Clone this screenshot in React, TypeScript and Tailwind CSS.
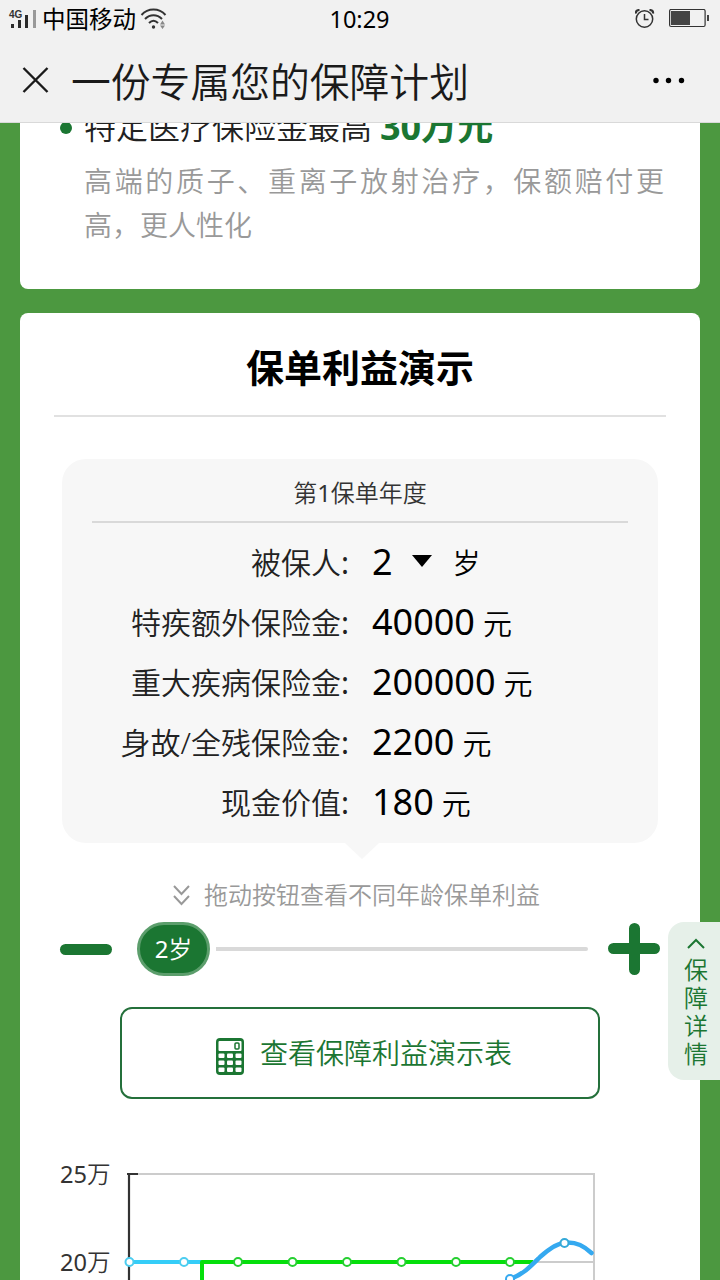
const rows = [
  { label: '特疾额外保险金', value: '40000' },
  { label: '重大疾病保险金', value: '200000' },
  { label: '身故/全残保险金', value: '2200' },
  { label: '现金价值', value: '180' },
];

const greenDots = [238, 292.5, 347, 401.5, 456, 510];

const StatusBar = () => (
  <div className="flex h-[38px] items-center justify-between pl-2 pr-[11px]">
    <div className="flex flex-1 items-center">
      <svg width="30" height="24" viewBox="0 0 30 24">
        <text x="1" y="10.500" fontSize="10" fontWeight="700" fill="#333" fontFamily="Liberation Sans, sans-serif">4G</text>
        <path d="M4.500 17v4M11.500 13v8M18.500 8v13" stroke="#2b2b2b" strokeWidth="3" />
        <path d="M26.500 3v18" stroke="#999" strokeWidth="3" />
      </svg>
      <span className="ml-1 pt-0.5 text-[23.5px] font-normal leading-none text-black">中国移动</span>
      <svg className="ml-1" width="28" height="24" viewBox="0 0 28 24" fill="none" stroke="#333" strokeWidth="2">
        <path d="M1.500 8C8 .8 19 .8 25.500 8M5 12c5-5 12-5 17 0M9 16c3-3 6-3 9 0" />
        <circle cx="13.500" cy="20" r="1.700" fill="#333" stroke="none" />
        <path d="M20 17.500l2.500-4 2.500 4zM20 18.500l2.500 3.500 2.500-3.500z" fill="#888" stroke="none" />
      </svg>
    </div>
    <span className="pl-0.5 pt-0.5 text-[23.5px] font-normal leading-none text-black">10:29</span>
    <div className="flex flex-1 items-center justify-end gap-3.5">
      <svg width="20" height="20" viewBox="0 0 20 20" fill="none" stroke="#333" strokeWidth="1.500">
        <circle cx="9.500" cy="10" r="8.200" />
        <path d="M9.500 5v5.500h4" />
        <path d="M1 4.500Q.5 1 4.500 1M18 4.500Q18.500 1 14.500 1" strokeWidth="2.200" />
      </svg>
      <svg width="40" height="20" viewBox="0 0 40 20">
        <rect x="0.600" y="0.500" width="35.500" height="17" rx="1.500" fill="none" stroke="#333" strokeWidth="1.200" />
        <rect x="2" y="2" width="19" height="14" fill="#444" />
        <rect x="38" y="6" width="2" height="6" fill="#444" />
      </svg>
    </div>
  </div>
);

const Header = () => (
  <header className="h-[123px] border-b border-[#d9d9d9] bg-[#f1f1f1]">
    <StatusBar />
    <div className="flex h-[84px] items-center pl-[22px] pr-[34px]">
      <svg width="27" height="27" viewBox="0 0 27 27" stroke="#1a1a1a" strokeWidth="2.400">
        <path d="M1.500 1l24 24M25.500 1l-24 24" />
      </svg>
      <h1 className="ml-[22px] flex-1 pt-1 text-[39.8px] font-[350] leading-none text-[#1a1a1a]">一份专属您的保障计划</h1>
      <svg width="34" height="8" viewBox="0 0 34 8" fill="#000">
        <circle cx="4" cy="4.500" r="2.700" />
        <circle cx="16.500" cy="4.500" r="2.700" />
        <circle cx="29.500" cy="4.500" r="2.700" />
      </svg>
    </div>
  </header>
);

const RowLabel = ({ text }: { text: string }) => (
  <span className="w-[257px] text-right text-[30px] text-[#222]">
    {text}
    <span className="font-normal">:</span>
  </span>
);

const Calculator = () => (
  <svg className="mt-2" width="30" height="38" viewBox="0 0 30 38">
    <rect x="1" y="0" width="28" height="37" rx="4" fill="#1b7632" />
    <rect x="3.500" y="3" width="23" height="10" rx="1" fill="#fff" />
    <rect x="20" y="5" width="4" height="6" rx="1" fill="none" stroke="#1b7632" strokeWidth="1.500" />
    {[15.5, 22.5, 29.5].map((y) =>
      [3.5, 12, 20.5].map((x) => (
        <rect key={`${x}-${y}`} x={x} y={y} width="6" height="4.500" rx="1" fill="#fff" />
      ))
    )}
  </svg>
);

const Slider = () => (
  <div className="mt-[9px] flex h-[54px] items-center px-10">
    <div className="h-[11px] w-[52px] rounded-full bg-[#1b7632]" />
    <div className="ml-[25px] flex h-[54px] w-[73px] items-center justify-center rounded-[27px] border-[3px] border-[#5c9e6c] bg-[#1b7632] text-[24px] leading-none text-white">
      <span className="font-normal">2</span>岁
    </div>
    <div className="ml-1.5 h-1 flex-1 rounded-r-full bg-[#d9d9d9]" />
    <svg className="ml-5" width="52" height="52" viewBox="0 0 52 52" stroke="#1b7632" strokeWidth="11" strokeLinecap="round">
      <path d="M5.500 25.500h41M26.500 5.500v41" />
    </svg>
  </div>
);

const Chart = () => (
  <svg className="mt-10 block" width="680" height="145" viewBox="20 1139 680 145" fill="none">
    <g fill="#333" fontSize="23.600">
      <text x="60" y="1182.500"><tspan fontWeight="400">25</tspan>万</text>
      <text x="60" y="1270.500"><tspan fontWeight="400">20</tspan>万</text>
    </g>
    <path d="M129 1174H594V1284M129 1262H594" stroke="#ccc" strokeWidth="2" />
    <path d="M127 1174h11M129 1174v110" stroke="#333" strokeWidth="2.200" />
    <path d="M129 1262H203" stroke="#35cdf8" strokeWidth="4" />
    <path d="M202 1284V1262H533" stroke="#05df0b" strokeWidth="4" strokeLinejoin="round" />
    <path d="M510 1279C524 1274 532 1265 540 1257C550 1248 558 1243 566 1242.500C577 1242 584 1246 591.500 1253" stroke="#35a9f0" strokeWidth="4.500" strokeLinecap="round" />
    <g fill="#fff" strokeWidth="2">
      {[129.5, 184].map((x) => (
        <circle key={x} cx={x} cy="1262" r="4" stroke="#4ccdf0" />
      ))}
      {greenDots.map((x) => (
        <circle key={x} cx={x} cy="1262" r="4" stroke="#25cf30" />
      ))}
      <circle cx="510" cy="1279" r="4" stroke="#35a9f0" />
      <circle cx="564.500" cy="1243" r="4" stroke="#35a9d8" />
    </g>
  </svg>
);

const App = () => {
  return (
    <div className="relative flex h-[1280px] w-[720px] flex-col overflow-hidden bg-[#4c9840] font-['Noto_Sans','Noto_Sans_CJK_SC',sans-serif] font-[350]">
      <Header />

      <main className="flex min-h-0 flex-1 flex-col gap-6 overflow-hidden px-5">
        <section className="-mt-[19px] h-[185px] shrink-0 rounded-b-lg bg-white pl-10 pr-9">
          <div className="flex h-[47px] items-center pb-0.5 leading-none">
            <span className="mr-[12px] mt-0.5 h-3 w-3 rounded-full bg-[#1b7632]" />
            <span className="text-[32px] text-[#222]">特定医疗保险金最高</span>
            <b className="ml-2 text-[36px] font-bold text-[#1b7632]">30万元</b>
          </div>
          <p className="ml-6 mt-2 w-[580px] text-justify text-[28px] leading-[44px] text-[#999]">
            高端的质子、重离子放射治疗，保额赔付更高，更人性化
          </p>
        </section>

        <section className="h-[980px] shrink-0 rounded-lg bg-white">
          <h2 className="mx-[34px] flex h-[104px] items-center justify-center border-b-2 border-[#e1e1e1] pb-0.5 pt-2 text-[38px] font-bold leading-none text-black">
            保单利益演示
          </h2>

          <div className="relative mx-[42px] mt-[42px] h-[384px] rounded-3xl bg-[#f7f7f7] px-[30px]">
            <h3 className="flex h-16 items-center justify-center border-b-2 border-[#d9d9d9] pt-1.5 text-[24px] leading-none text-[#333]">
              <span>第<span className="font-normal">1</span>保单年度</span>
            </h3>
            <div className="pt-[10px] leading-none text-black">
              <div className="flex h-[60px] items-center">
                <RowLabel text="被保人" />
                <span className="ml-[23px] pb-[3px] text-[36px] font-normal">2</span>
                <svg className="mb-1 ml-[19px]" width="20" height="12" viewBox="0 0 20 12">
                  <path d="M0 0h20L10 12z" />
                </svg>
                <span className="ml-[21px] text-[28px]">岁</span>
              </div>
              {rows.map((row) => (
                <div key={row.label} className="flex h-[60px] items-center">
                  <RowLabel text={row.label} />
                  <span className="ml-[23px] pb-[3px] text-[36px] font-normal">{row.value}</span>
                  <span className="ml-2 text-[29px]">元</span>
                </div>
              ))}
            </div>
            <svg className="absolute left-[283px] top-[384px]" width="34" height="16" viewBox="0 0 34 16">
              <path d="M0 0h34L17 16z" fill="#f7f7f7" />
            </svg>
          </div>

          <div className="mt-[34px] flex h-9 items-center pl-[153px] text-[24px] leading-none text-[#999]">
            <svg width="17" height="22" viewBox="0 0 17 22" fill="none" stroke="#999" strokeWidth="2">
              <path d="M1 2l7.500 8L16 2M1 12l7.500 8L16 12" />
            </svg>
            <span className="ml-3.5">拖动按钮查看不同年龄保单利益</span>
          </div>

          <Slider />

          <button className="mx-auto mt-[31px] flex h-[92px] w-[480px] items-center justify-center rounded-xl border-2 border-[#24703b] pl-[7px] text-[28px] leading-none text-[#1b7632]">
            <Calculator />
            <span className="ml-[15px]">查看保障利益演示表</span>
          </button>

          <Chart />
        </section>
      </main>

      {/* floating tab on the right edge */}
      <aside className="absolute right-0 top-[922px] flex h-[158px] w-[52px] flex-col items-center rounded-l-2xl bg-[#e6f0e9] pl-1 pt-4 text-[24px] leading-7 text-[#1b7632]">
        <svg className="mb-1.5 shrink-0" width="18" height="12" viewBox="0 0 18 12" fill="none" stroke="#1b7632" strokeWidth="2">
          <path d="M1 10l8-8 8 8" />
        </svg>
        <span className="w-6 text-center">保障详情</span>
      </aside>
    </div>
  );
};

export default App;
